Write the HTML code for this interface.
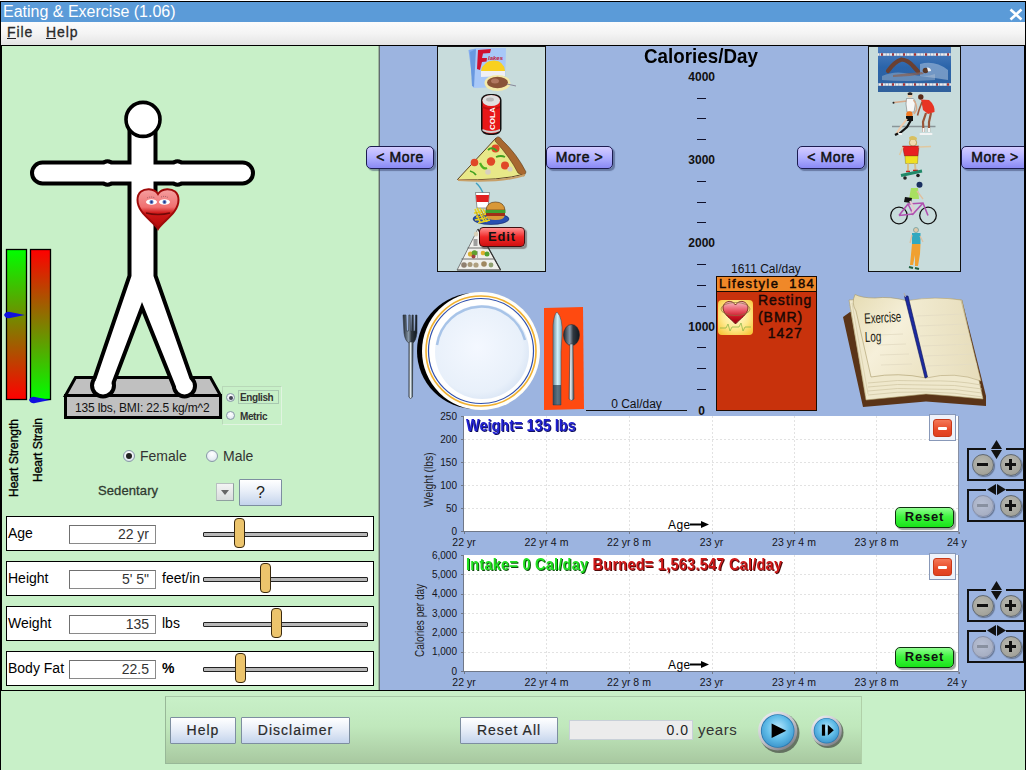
<!DOCTYPE html>
<html><head><meta charset="utf-8">
<style>
*{margin:0;padding:0;box-sizing:border-box}
html,body{width:1026px;height:770px;overflow:hidden;background:#fff;font-family:"Liberation Sans",sans-serif}
.a{position:absolute}
#win{position:absolute;left:0;top:0;width:1026px;height:770px;background:#c8f0c8;overflow:hidden}
#bord{position:absolute;left:0;top:1px;z-index:50;width:1026px;height:770px;border-left:1px solid #000;border-top:1px solid #000;border-right:1px solid #000}
#title{left:1px;top:2px;width:1024px;height:20px;background:#5b9bd8;color:#fff;font-size:16px;line-height:19px;padding-left:2px;white-space:nowrap}
#menu{left:1px;top:22px;width:1024px;height:23px;background:linear-gradient(#fcfcfc,#f4f4f4 50%,#e4e4e4);font-size:14px;color:#2a2a2a}
#menu span{position:absolute;top:2px;letter-spacing:0.9px;-webkit-text-stroke:0.3px #2a2a2a}
#menu u{text-decoration:none}
#sep{left:1px;top:45px;width:1024px;height:1px;background:#000}
#left{left:1px;top:46px;width:377px;height:644px;background:#c8f0c8;border-left:1px solid #000}
#blue{left:380px;top:46px;width:645px;height:644px;background:#9cb4e0}
#bredge{left:1024px;top:46px;width:1px;height:644px;background:#000;z-index:40}
#vsep{left:378px;top:46px;width:2px;height:644px;background:linear-gradient(90deg,#a0b8a0 0,#a0b8a0 50%,#606c70 50%,#606c70 100%)}
#hsep{left:1px;top:690px;width:1024px;height:1px;background:#000}

.rad{width:12px;height:12px;border-radius:50%;background:radial-gradient(circle at 50% 30%,#fff,#e8eef4 60%,#c8d0dc);border:1px solid #8898a8}
.rad i{position:absolute;left:2px;top:2px;width:6px;height:6px;border-radius:50%;background:#222}
.rad.sm{width:9px;height:9px}
.rad.sm i{left:1.5px;top:1.5px;width:4px;height:4px;background:#445}
.btnb{background:linear-gradient(#ffffff,#e8eef8 45%,#c4d4ec);border:1px solid #7d8ea0;color:#222;text-align:center;border-radius:1px}
.srow{left:6px;width:368px;height:35px;background:#fff;border:1.5px solid #000}
.srow .lb{position:absolute;left:1px;top:8px;font-size:14px;color:#000;line-height:16px}
.srow .tf{position:absolute;left:62px;top:7.5px;width:87px;height:19px;border:1px solid #8a8a8a;border-top-color:#707070;border-left-color:#707070;font-size:14px;color:#333;text-align:right;padding-right:6px;line-height:17px}
.srow .un{position:absolute;left:155px;top:8px;font-size:14px;color:#000;line-height:16px}
.srow::after{content:"";position:absolute;left:196px;top:15px;width:163px;height:3px;background:#b8b8b8;border:1px solid #222;border-radius:1px}
.thumb{width:11px;height:30px;background:#ecc46c;border:1.5px solid #3a2a10;border-radius:4px;z-index:5}

.more{height:23px;border:1.5px solid #1c1c50;border-radius:5px;background:linear-gradient(#d4ccff,#b0b0ff 50%,#8a8af4);font-size:14px;font-weight:normal;color:#111;text-align:center;line-height:20px;letter-spacing:0.6px;-webkit-text-stroke:0.5px #111;box-shadow:2px 2px 1px rgba(40,50,90,0.45);white-space:nowrap}
.axl{font-size:12px;font-weight:bold;color:#111;text-align:right;line-height:14px}

.yl{font-size:10px;color:#151520;text-align:right;line-height:13px}
.xl{font-size:10.5px;color:#151520;line-height:14px;white-space:nowrap}
.ytl{font-size:12px;color:#222;line-height:12px;white-space:nowrap;transform-origin:0 0}
.minb{width:27px;height:27px;border:1px solid #8898b8;background:#eef2fa}
.minb .mi{position:absolute;left:3px;top:4px;width:19px;height:18px;border-radius:3px;background:linear-gradient(#f47858,#e84a28 60%,#e04020);border:1px solid #c83818}
.minb .mi i{position:absolute;left:4px;top:7px;width:9px;height:2.5px;background:#fff;border-radius:1px}
.rst{width:59px;height:21px;border:1.5px solid #103010;border-radius:5px;background:linear-gradient(#90ff90,#40f440 45%,#18e418);font-size:13px;font-weight:bold;color:#111;text-align:center;line-height:18px;letter-spacing:0.8px;box-shadow:2px 2px 1px rgba(40,60,40,0.45)}
.zb{width:22px;height:22px;border-radius:50%;background:radial-gradient(circle at 45% 40%,#b8b8b0,#a4a49c 65%,#88887f);border:1.2px solid #606870;box-shadow:1px 1px 1px rgba(0,0,0,0.35)}
.zb b{position:absolute;background:#111}
.zb b.h{left:4.3px;top:8.3px;width:11px;height:3px}
.zb b.v{left:8.3px;top:4.3px;width:3px;height:11px}
.zb.dis{background:radial-gradient(circle at 45% 40%,#b8c0d4,#a8b0c4 65%,#98a0b8);border-color:#8890a8}
.zb.dis b{background:#8890a0}

.bt{font-size:14px;font-weight:normal;line-height:25px;letter-spacing:1px;color:#2a2a2a;-webkit-text-stroke:0.2px #2a2a2a}
.edit{width:46px;height:20px;border:1.5px solid #401010;border-radius:4px;background:linear-gradient(#ff9090,#f02828 50%,#d01010);font-size:13px;font-weight:bold;color:#111;text-align:center;line-height:17px;letter-spacing:0.8px;box-shadow:2px 2px 1px rgba(60,40,40,0.45)}
</style></head><body>
<div id="win">
<div id="bord"></div><div class="a" style="left:0;top:0;width:1026px;height:1px;background:#fff;z-index:60"></div>
<div class="a" id="title">Eating &amp; Exercise (1.06)</div>
<div class="a" id="menu"><span style="left:6px"><u>F</u>ile</span><span style="left:45px"><u>H</u>elp</span></div>
<svg class="a" style="left:1008px;top:7px" width="16" height="15"><path d="M2.5,2.5 L13.5,12.5 M13.5,2.5 L2.5,12.5" stroke="#fff" stroke-width="2.6"/></svg>
<div class="a" style="left:7px;top:38px;width:9px;height:1px;background:#222"></div><div class="a" style="left:46px;top:38px;width:10px;height:1px;background:#222"></div>
<div class="a" id="sep"></div>
<div class="a" id="left"></div>
<div class="a" id="vsep"></div>
<div class="a" id="blue"></div>
<div class="a" id="hsep"></div>
<div class="a" id="bredge"></div>
<!-- LEFT PANEL -->
<svg class="a" style="left:0;top:0" width="1026" height="770">
<defs>
<linearGradient id="gStr" x1="0" y1="0" x2="0" y2="1"><stop offset="0" stop-color="#00ff00"/><stop offset="0.5" stop-color="#7f7f00"/><stop offset="1" stop-color="#ff0000"/></linearGradient>
<linearGradient id="gStn" x1="0" y1="0" x2="0" y2="1"><stop offset="0" stop-color="#ff0000"/><stop offset="0.5" stop-color="#7f7f00"/><stop offset="1" stop-color="#00ff00"/></linearGradient>
</defs>
<rect x="6.5" y="249.5" width="20" height="150" fill="url(#gStr)" stroke="#000" stroke-width="1.3"/>
<rect x="30.5" y="249.5" width="20" height="150" fill="url(#gStn)" stroke="#000" stroke-width="1.3"/>
<path d="M4,315 Q6,311 10,312 L25,315 L10,318 Q6,319 4,315Z" fill="#1010e0"/>
<path d="M29,400 Q31,396 35,397 L50,400 L35,403 Q31,404 29,400Z" fill="#1010e0"/>
<!-- platform -->
<path d="M75.5,377.5 L210.5,377.5 L220.5,395.5 L65.5,395.5Z" fill="#c0c0c0" stroke="#000" stroke-width="3" stroke-linejoin="miter"/>
<rect x="65.5" y="395.5" width="155" height="22" fill="#c0c0c0" stroke="#000" stroke-width="3"/>
<!-- figure -->
<g stroke="#000" stroke-width="8" fill="#fff" stroke-linejoin="round">
<rect x="34" y="164.5" width="217" height="17" rx="8.5"/><ellipse cx="107.5" cy="173" rx="6" ry="9.8"/><ellipse cx="177.5" cy="173" rx="6" ry="9.8"/>
<path d="M131.5,130 L153.5,130 L153.5,276 L191,383 L177,389 L142,302 L109,389 L95,383 L131.5,276Z"/><circle cx="103" cy="385.5" r="9"/><circle cx="184.5" cy="386" r="8.5"/>
</g>
<g fill="#fff">
<rect x="34" y="164.5" width="217" height="17" rx="8.5"/><ellipse cx="107.5" cy="173" rx="6" ry="9.8"/><ellipse cx="177.5" cy="173" rx="6" ry="9.8"/>
<path d="M131.5,130 L153.5,130 L153.5,276 L191,383 L177,389 L142,302 L109,389 L95,383 L131.5,276Z"/><circle cx="103" cy="385.5" r="9"/><circle cx="184.5" cy="386" r="8.5"/>
</g>
<circle cx="143" cy="119.4" r="17" fill="#fff" stroke="#000" stroke-width="3.6"/>
</svg>

<!-- heart on chest -->
<svg class="a" style="left:134px;top:186px" width="48" height="46" viewBox="0 0 48 46">
<defs>
<linearGradient id="hg" x1="0" y1="0" x2="0" y2="1"><stop offset="0" stop-color="#f4a0a0"/><stop offset="0.45" stop-color="#f07070"/><stop offset="0.6" stop-color="#d01818"/><stop offset="1" stop-color="#b00808"/></linearGradient>
</defs>
<path d="M24,43 C19,35 3.5,27 3.5,14 C3.5,6 9,3 15,3.2 C19.5,3.5 22.5,5.5 24,8 C25.5,5.5 28.5,3.5 33,3.2 C39,3 44.5,6 44.5,14 C44.5,27 29,35 24,43Z" fill="url(#hg)" stroke="#a00a0a" stroke-width="2"/>
<ellipse cx="17.5" cy="16" rx="5.5" ry="2.8" fill="#fff"/>
<ellipse cx="30.5" cy="16" rx="5.5" ry="2.8" fill="#fff"/>
<circle cx="17.5" cy="16" r="2" fill="#5070c0"/><circle cx="30.5" cy="16" r="2" fill="#5070c0"/>
<circle cx="17.5" cy="16" r="0.8" fill="#102060"/><circle cx="30.5" cy="16" r="0.8" fill="#102060"/>
<path d="M13,12 Q17,10 21,12 M27,11 Q31,9.5 34,11.5" stroke="#8a5060" stroke-width="0.8" fill="none" stroke-dasharray="1,1"/>
<path d="M12,27 Q24,30 36,27" stroke="#700808" stroke-width="1.6" fill="none"/>
</svg>
<div class="a" style="left:75px;top:401px;font-size:12px;color:#111;white-space:nowrap;letter-spacing:-0.15px">135 lbs, BMI: 22.5 kg/m^2</div>
<!-- heart labels -->
<div class="a" style="left:6.5px;top:497px;font-size:12px;color:#000;white-space:nowrap;transform:rotate(-90deg);transform-origin:0 0;line-height:14px;-webkit-text-stroke:0.35px #000">Heart Strength</div>
<div class="a" style="left:31px;top:482px;font-size:12px;color:#000;white-space:nowrap;transform:rotate(-90deg);transform-origin:0 0;line-height:14px;-webkit-text-stroke:0.35px #000">Heart Strain</div>
<!-- english/metric -->
<div class="a" style="left:222px;top:386px;width:60px;height:39px;border:1px solid #b8d8b8;border-right-color:#e0f4e0;border-bottom-color:#e0f4e0"></div>
<div class="a" style="left:238px;top:390px;width:41px;height:14px;border:1px solid #a8c8b0"></div>
<div class="a rad sm" style="left:226px;top:393px"><i></i></div>
<div class="a rad sm" style="left:226px;top:411px"></div>
<div class="a" style="left:240px;top:391px;font-size:10px;font-weight:bold;color:#333;line-height:14px;letter-spacing:-0.4px">English</div>
<div class="a" style="left:240px;top:409.5px;font-size:10px;font-weight:bold;color:#333;line-height:14px;letter-spacing:-0.4px">Metric</div>
<!-- gender -->
<div class="a rad" style="left:123px;top:450px"><i></i></div>
<div class="a" style="left:140px;top:448px;font-size:14px;color:#333;line-height:16px">Female</div>
<div class="a rad" style="left:206px;top:450px"></div>
<div class="a" style="left:223px;top:448px;font-size:14px;color:#333;line-height:16px">Male</div>
<!-- sedentary -->
<div class="a" style="left:98px;top:483.5px;font-size:13px;color:#303a30;line-height:14px;letter-spacing:0.1px;-webkit-text-stroke:0.3px #303a30">Sedentary</div>
<div class="a" style="left:216px;top:483px;width:18px;height:18px;background:linear-gradient(#f4f4f4,#d8dcdc);border:1px solid #b8c0c0;border-right-color:#90a0a0;border-bottom-color:#90a0a0"><div class="a" style="left:4px;top:6px;width:0;height:0;border-left:4px solid transparent;border-right:4px solid transparent;border-top:5px solid #666"></div></div>
<div class="a btnb" style="left:239px;top:479px;width:43px;height:27px;font-size:16px;line-height:25px">?</div>
<!-- sliders -->
<div class="a srow" style="top:516px"><span class="lb">Age</span><div class="tf">22 yr</div></div>
<div class="a srow" style="top:561px"><span class="lb">Height</span><div class="tf">5' 5"</div><span class="un">feet/in</span></div>
<div class="a srow" style="top:606px"><span class="lb">Weight</span><div class="tf">135</div><span class="un">lbs</span></div>
<div class="a srow" style="top:651px"><span class="lb">Body Fat</span><div class="tf">22.5</div><span class="un" style="font-weight:bold">%</span></div>
<div class="a thumb" style="left:234px;top:518px"></div>
<div class="a thumb" style="left:260px;top:563px"></div>
<div class="a thumb" style="left:271px;top:608px"></div>
<div class="a thumb" style="left:235px;top:653px"></div>
<div class="a more" style="left:366px;top:146px;width:68px">&lt; More</div>
<div class="a more" style="left:546px;top:146px;width:67px">More &gt;</div>
<div class="a more" style="left:797px;top:146px;width:68px">&lt; More</div>
<div class="a more" style="left:961px;top:146px;width:68px">More &gt;</div>
<div class="a" style="left:437px;top:46px;width:109px;height:226px;background:#c8dcdc;border:1.5px solid #111"></div>
<div class="a" style="left:868px;top:46px;width:93px;height:226px;background:#c8dcdc;border:1.5px solid #111"></div>
<div class="a" style="left:644px;top:45px;font-size:21px;font-weight:bold;color:#000;line-height:21px;white-space:nowrap;transform:scaleX(0.895);transform-origin:0 0">Calories/Day</div>
<div class="a axl" style="left:671px;top:69.5px;width:44px">4000</div>
<div class="a axl" style="left:671px;top:153.0px;width:44px">3000</div>
<div class="a axl" style="left:671px;top:236.3px;width:44px">2000</div>
<div class="a axl" style="left:671px;top:319.7px;width:44px">1000</div>
<div class="a axl" style="left:671px;top:404px;width:34px">0</div>
<div class="a" style="left:697px;top:98px;width:9px;height:1.2px;background:#10102a"></div>
<div class="a" style="left:697px;top:118px;width:9px;height:1.2px;background:#10102a"></div>
<div class="a" style="left:697px;top:139px;width:9px;height:1.2px;background:#10102a"></div>
<div class="a" style="left:697px;top:181px;width:9px;height:1.2px;background:#10102a"></div>
<div class="a" style="left:697px;top:202px;width:9px;height:1.2px;background:#10102a"></div>
<div class="a" style="left:697px;top:222px;width:9px;height:1.2px;background:#10102a"></div>
<div class="a" style="left:697px;top:264px;width:9px;height:1.2px;background:#10102a"></div>
<div class="a" style="left:697px;top:285px;width:9px;height:1.2px;background:#10102a"></div>
<div class="a" style="left:697px;top:306px;width:9px;height:1.2px;background:#10102a"></div>
<div class="a" style="left:697px;top:347px;width:9px;height:1.2px;background:#10102a"></div>
<div class="a" style="left:697px;top:368px;width:9px;height:1.2px;background:#10102a"></div>
<div class="a" style="left:697px;top:389px;width:9px;height:1.2px;background:#10102a"></div>
<div class="a" style="left:731px;top:262px;font-size:12px;color:#111;line-height:14px;white-space:nowrap">1611 Cal/day</div>
<div class="a" style="left:716px;top:276px;width:101px;height:135px;background:#c8320c;border:1.5px solid #1a0a00"></div>
<div class="a" style="left:716px;top:276px;width:101px;height:16px;background:#f08828;border:1.5px solid #1a0a00;border-bottom-width:1px"></div>
<div class="a" style="left:719px;top:276px;font-size:13px;color:#140600;line-height:16px;letter-spacing:1.4px;white-space:pre;-webkit-text-stroke:0.45px #140600">Lifestyle  184</div>
<div class="a" style="left:758px;top:292px;font-size:14px;color:#1a0804;line-height:16.6px;letter-spacing:0.95px;white-space:pre;-webkit-text-stroke:0.45px #1a0804">Resting
(BMR)
  1427</div>
<div class="a" style="left:586px;top:397px;width:101px;font-size:12px;color:#111;line-height:14px;text-align:center">0 Cal/day</div>
<div class="a" style="left:586px;top:409.5px;width:101px;height:1.3px;background:#111"></div>
<div class="a" style="left:464px;top:416px;width:495px;height:115px;background:#fff"></div>
<svg class="a" style="left:464px;top:416px" width="495" height="115"><line x1="0" y1="92.5" x2="495" y2="92.5" stroke="#e2e2e2" stroke-width="1" stroke-dasharray="2,2"/><line x1="0" y1="69.5" x2="495" y2="69.5" stroke="#e2e2e2" stroke-width="1" stroke-dasharray="2,2"/><line x1="0" y1="46.5" x2="495" y2="46.5" stroke="#e2e2e2" stroke-width="1" stroke-dasharray="2,2"/><line x1="0" y1="23.5" x2="495" y2="23.5" stroke="#e2e2e2" stroke-width="1" stroke-dasharray="2,2"/><line x1="82.5" y1="0" x2="82.5" y2="115" stroke="#e2e2e2" stroke-width="1" stroke-dasharray="2,2"/><line x1="165.5" y1="0" x2="165.5" y2="115" stroke="#e2e2e2" stroke-width="1" stroke-dasharray="2,2"/><line x1="248.5" y1="0" x2="248.5" y2="115" stroke="#e2e2e2" stroke-width="1" stroke-dasharray="2,2"/><line x1="330.5" y1="0" x2="330.5" y2="115" stroke="#e2e2e2" stroke-width="1" stroke-dasharray="2,2"/><line x1="412.5" y1="0" x2="412.5" y2="115" stroke="#e2e2e2" stroke-width="1" stroke-dasharray="2,2"/></svg>
<div class="a" style="left:463px;top:416px;width:1px;height:116px;background:#707888"></div>
<div class="a" style="left:463px;top:531px;width:496px;height:1px;background:#707888"></div>
<div class="a" style="left:958px;top:416px;width:1px;height:118px;background:#8890a4"></div>
<div class="a yl" style="left:404px;top:524.5px;width:53px">0</div>
<div class="a" style="left:461px;top:531px;width:2px;height:1px;background:#707888"></div>
<div class="a yl" style="left:404px;top:501.5px;width:53px">50</div>
<div class="a" style="left:461px;top:508px;width:2px;height:1px;background:#707888"></div>
<div class="a yl" style="left:404px;top:478.5px;width:53px">100</div>
<div class="a" style="left:461px;top:485px;width:2px;height:1px;background:#707888"></div>
<div class="a yl" style="left:404px;top:455.5px;width:53px">150</div>
<div class="a" style="left:461px;top:462px;width:2px;height:1px;background:#707888"></div>
<div class="a yl" style="left:404px;top:432.5px;width:53px">200</div>
<div class="a" style="left:461px;top:439px;width:2px;height:1px;background:#707888"></div>
<div class="a yl" style="left:404px;top:409.5px;width:53px">250</div>
<div class="a" style="left:461px;top:416px;width:2px;height:1px;background:#707888"></div>
<div class="a xl" style="left:424.0px;top:535px;width:80px;text-align:center">22 yr</div>
<div class="a" style="left:464px;top:532px;width:1px;height:2px;background:#707888"></div>
<div class="a xl" style="left:506.5px;top:535px;width:80px;text-align:center">22 yr 4 m</div>
<div class="a" style="left:546px;top:532px;width:1px;height:2px;background:#707888"></div>
<div class="a xl" style="left:589.0px;top:535px;width:80px;text-align:center">22 yr 8 m</div>
<div class="a" style="left:629px;top:532px;width:1px;height:2px;background:#707888"></div>
<div class="a xl" style="left:671.5px;top:535px;width:80px;text-align:center">23 yr</div>
<div class="a" style="left:712px;top:532px;width:1px;height:2px;background:#707888"></div>
<div class="a xl" style="left:754.0px;top:535px;width:80px;text-align:center">23 yr 4 m</div>
<div class="a" style="left:794px;top:532px;width:1px;height:2px;background:#707888"></div>
<div class="a xl" style="left:836.5px;top:535px;width:80px;text-align:center">23 yr 8 m</div>
<div class="a" style="left:876px;top:532px;width:1px;height:2px;background:#707888"></div>
<div class="a xl" style="left:947.0px;top:535px">24 y</div>
<div class="a" style="left:959px;top:532px;width:1px;height:2px;background:#707888"></div>
<div class="a ytl" style="left:423px;top:506.5px;transform:rotate(-90deg) scaleX(0.855)">Weight (lbs)</div>
<div class="a" style="left:668px;top:517.5px;font-size:12px;letter-spacing:0.4px;color:#000;line-height:14px">Age</div>
<svg class="a" style="left:690px;top:520px" width="22" height="9"><path d="M0,4.5 L13,4.5" stroke="#000" stroke-width="2"/><path d="M11,1 L19,4.5 L11,8Z" fill="#000"/></svg>
<div class="a" style="left:466px;top:417px;font-size:14.5px;font-weight:bold;color:#2020d0;text-shadow:1px 1px 0 #101060;line-height:16px;white-space:nowrap;transform:scaleY(1.1);transform-origin:0 0">Weight= 135 lbs</div>
<div class="a minb" style="left:929px;top:414px"><div class="mi"><i></i></div></div>
<div class="a rst" style="left:895px;top:507px">Reset</div>
<svg class="a" style="left:966px;top:440px" width="60" height="82"><path d="M20,9 L2,9 L2,40 L58,40 L58,9 L40,9" fill="none" stroke="#111" stroke-width="2"/><path d="M30.5,0 L36,9 L25,9Z M30.5,19 L36,10 L25,10Z" fill="#111"/><path d="M20,50 L2,50 L2,81 L58,81 L58,50 L40,50" fill="none" stroke="#111" stroke-width="2"/><path d="M21,49.5 L30,44 L30,55Z M40,49.5 L31,44 L31,55Z" fill="#111"/></svg>
<div class="a zb" style="left:971.5px;top:454px"><b class="h"></b></div>
<div class="a zb" style="left:999.5px;top:454px"><b class="h"></b><b class="v"></b></div>
<div class="a zb dis" style="left:971.5px;top:495px"><b class="h"></b></div>
<div class="a zb" style="left:999.5px;top:495px"><b class="h"></b><b class="v"></b></div>
<div class="a" style="left:464px;top:555px;width:495px;height:116px;background:#fff"></div>
<svg class="a" style="left:464px;top:555px" width="495" height="116"><line x1="0" y1="97.5" x2="495" y2="97.5" stroke="#e2e2e2" stroke-width="1" stroke-dasharray="2,2"/><line x1="0" y1="77.5" x2="495" y2="77.5" stroke="#e2e2e2" stroke-width="1" stroke-dasharray="2,2"/><line x1="0" y1="58.5" x2="495" y2="58.5" stroke="#e2e2e2" stroke-width="1" stroke-dasharray="2,2"/><line x1="0" y1="39.5" x2="495" y2="39.5" stroke="#e2e2e2" stroke-width="1" stroke-dasharray="2,2"/><line x1="0" y1="19.5" x2="495" y2="19.5" stroke="#e2e2e2" stroke-width="1" stroke-dasharray="2,2"/><line x1="82.5" y1="0" x2="82.5" y2="116" stroke="#e2e2e2" stroke-width="1" stroke-dasharray="2,2"/><line x1="165.5" y1="0" x2="165.5" y2="116" stroke="#e2e2e2" stroke-width="1" stroke-dasharray="2,2"/><line x1="248.5" y1="0" x2="248.5" y2="116" stroke="#e2e2e2" stroke-width="1" stroke-dasharray="2,2"/><line x1="330.5" y1="0" x2="330.5" y2="116" stroke="#e2e2e2" stroke-width="1" stroke-dasharray="2,2"/><line x1="412.5" y1="0" x2="412.5" y2="116" stroke="#e2e2e2" stroke-width="1" stroke-dasharray="2,2"/></svg>
<div class="a" style="left:463px;top:555px;width:1px;height:117px;background:#707888"></div>
<div class="a" style="left:463px;top:671px;width:496px;height:1px;background:#707888"></div>
<div class="a" style="left:958px;top:555px;width:1px;height:119px;background:#8890a4"></div>
<div class="a yl" style="left:404px;top:664.5px;width:53px">0</div>
<div class="a" style="left:461px;top:671px;width:2px;height:1px;background:#707888"></div>
<div class="a yl" style="left:404px;top:645.2px;width:53px">1,000</div>
<div class="a" style="left:461px;top:652px;width:2px;height:1px;background:#707888"></div>
<div class="a yl" style="left:404px;top:625.8px;width:53px">2,000</div>
<div class="a" style="left:461px;top:632px;width:2px;height:1px;background:#707888"></div>
<div class="a yl" style="left:404px;top:606.5px;width:53px">3,000</div>
<div class="a" style="left:461px;top:613px;width:2px;height:1px;background:#707888"></div>
<div class="a yl" style="left:404px;top:587.2px;width:53px">4,000</div>
<div class="a" style="left:461px;top:594px;width:2px;height:1px;background:#707888"></div>
<div class="a yl" style="left:404px;top:567.8px;width:53px">5,000</div>
<div class="a" style="left:461px;top:574px;width:2px;height:1px;background:#707888"></div>
<div class="a yl" style="left:404px;top:548.5px;width:53px">6,000</div>
<div class="a" style="left:461px;top:555px;width:2px;height:1px;background:#707888"></div>
<div class="a xl" style="left:424.0px;top:675px;width:80px;text-align:center">22 yr</div>
<div class="a" style="left:464px;top:672px;width:1px;height:2px;background:#707888"></div>
<div class="a xl" style="left:506.5px;top:675px;width:80px;text-align:center">22 yr 4 m</div>
<div class="a" style="left:546px;top:672px;width:1px;height:2px;background:#707888"></div>
<div class="a xl" style="left:589.0px;top:675px;width:80px;text-align:center">22 yr 8 m</div>
<div class="a" style="left:629px;top:672px;width:1px;height:2px;background:#707888"></div>
<div class="a xl" style="left:671.5px;top:675px;width:80px;text-align:center">23 yr</div>
<div class="a" style="left:712px;top:672px;width:1px;height:2px;background:#707888"></div>
<div class="a xl" style="left:754.0px;top:675px;width:80px;text-align:center">23 yr 4 m</div>
<div class="a" style="left:794px;top:672px;width:1px;height:2px;background:#707888"></div>
<div class="a xl" style="left:836.5px;top:675px;width:80px;text-align:center">23 yr 8 m</div>
<div class="a" style="left:876px;top:672px;width:1px;height:2px;background:#707888"></div>
<div class="a xl" style="left:947.0px;top:675px">24 y</div>
<div class="a" style="left:959px;top:672px;width:1px;height:2px;background:#707888"></div>
<div class="a ytl" style="left:414px;top:657px;transform:rotate(-90deg) scaleX(0.837)">Calories per day</div>
<div class="a" style="left:668px;top:657.5px;font-size:12px;letter-spacing:0.4px;color:#000;line-height:14px">Age</div>
<svg class="a" style="left:690px;top:660px" width="22" height="9"><path d="M0,4.5 L13,4.5" stroke="#000" stroke-width="2"/><path d="M11,1 L19,4.5 L11,8Z" fill="#000"/></svg>
<div class="a" style="left:466px;top:556px;font-size:14.5px;font-weight:bold;line-height:16px;white-space:nowrap;letter-spacing:0.25px;transform:scaleY(1.1);transform-origin:0 0"><span style="color:#20e020;text-shadow:1px 1px 0 #0a500a">Intake= 0 Cal/day </span><span style="color:#d01818;text-shadow:1px 1px 0 #500808">Burned= 1,563.547 Cal/day</span></div>
<div class="a minb" style="left:929px;top:553px"><div class="mi"><i></i></div></div>
<div class="a rst" style="left:895px;top:647px">Reset</div>
<svg class="a" style="left:966px;top:580.5px" width="60" height="82"><path d="M20,9 L2,9 L2,40 L58,40 L58,9 L40,9" fill="none" stroke="#111" stroke-width="2"/><path d="M30.5,0 L36,9 L25,9Z M30.5,19 L36,10 L25,10Z" fill="#111"/><path d="M20,50 L2,50 L2,81 L58,81 L58,50 L40,50" fill="none" stroke="#111" stroke-width="2"/><path d="M21,49.5 L30,44 L30,55Z M40,49.5 L31,44 L31,55Z" fill="#111"/></svg>
<div class="a zb" style="left:971.5px;top:594.5px"><b class="h"></b></div>
<div class="a zb" style="left:999.5px;top:594.5px"><b class="h"></b><b class="v"></b></div>
<div class="a zb dis" style="left:971.5px;top:635.5px"><b class="h"></b></div>
<div class="a zb" style="left:999.5px;top:635.5px"><b class="h"></b><b class="v"></b></div>
<!-- CLIPART -->
<svg class="a" style="left:0;top:0" width="1026" height="770">
<defs>
<radialGradient id="plg" cx="0.45" cy="0.45" r="0.6"><stop offset="0" stop-color="#f4f8ff"/><stop offset="0.8" stop-color="#e8f0fa"/><stop offset="1" stop-color="#d8e4f4"/></radialGradient>
<linearGradient id="silv" x1="0" y1="0" x2="1" y2="0"><stop offset="0" stop-color="#707880"/><stop offset="0.35" stop-color="#f0f4f8"/><stop offset="0.6" stop-color="#a0b0b8"/><stop offset="1" stop-color="#404850"/></linearGradient>
<linearGradient id="silvd" x1="0" y1="0" x2="1" y2="0"><stop offset="0" stop-color="#202830"/><stop offset="0.4" stop-color="#8898a8"/><stop offset="0.6" stop-color="#303840"/><stop offset="1" stop-color="#101820"/></linearGradient>
<linearGradient id="knf" x1="0" y1="0" x2="1" y2="0"><stop offset="0" stop-color="#6a8a98"/><stop offset="0.5" stop-color="#d0f0f8"/><stop offset="1" stop-color="#88b0c0"/></linearGradient>
</defs>
<!-- plate -->
<circle cx="475" cy="351" r="58" fill="#000"/>
<circle cx="481" cy="351" r="59" fill="#fffef8"/>
<circle cx="481" cy="351" r="55" fill="none" stroke="#f0b030" stroke-width="1.6"/>
<circle cx="481" cy="351" r="52.5" fill="none" stroke="#3050b0" stroke-width="1.2"/>
<circle cx="481" cy="351" r="51" fill="#fff"/>
<circle cx="482" cy="352" r="47" fill="url(#plg)"/>
<path d="M437,345 A45,45 0 0 1 525,340" fill="none" stroke="#a8c4e8" stroke-width="2.5"/>
<!-- fork -->
<path fill="url(#silvd)" d="M403,315 L404,333 Q405,341 409,343 L409,397 Q410,400 412,397 L413,343 Q416,341 417,333 L417,315 L415.5,315 L415,331 L413.5,331 L413.3,315 L412,315 L411.5,331 L410.5,331 L410.2,315 L408.8,315 L408.5,331 L406.5,331 L406,315Z" stroke="#303840" stroke-width="0.6"/>
<path d="M409.2,342 L409,397 Q410.5,400 412.5,397 L412.8,342Z" fill="url(#silv)" stroke="#303840" stroke-width="0.5"/>
<!-- napkin -->
<path d="M544,308 L583,307 L584,409 L544,410Z" fill="#ff4a10"/>
<!-- knife -->
<path d="M557,312 Q563,318 562,335 L561,352 L561,405 L553,405 L553,352 L553,325 Q554,314 557,312Z" fill="url(#knf)" stroke="#304050" stroke-width="0.5"/>
<rect x="553" y="385" width="8" height="20" fill="#102030" opacity="0.6"/>
<!-- spoon -->
<ellipse cx="571.5" cy="335" rx="8" ry="10.5" fill="url(#silvd)" stroke="#202830" stroke-width="0.6"/>
<path d="M570,344 L569,399 Q571.5,402 574,399 L573,344Z" fill="url(#silv)" stroke="#303840" stroke-width="0.5"/>
<!-- food items -->
<g>
<path d="M468.5,50 L476,48.5 L474,87.5 L473.5,87.5Z" fill="#80aaf0"/>
<path d="M475,48 L506,48 L505,87 L473.5,88Z" fill="#a8c8f8"/>
<path d="M470,52 L476,49 L474,87 L472,86Z" fill="#6898e0"/>
<path d="M478,50 L491,49 L490,53 L483,53.5 L482,58 L487,58 L486.5,61.5 L482,62 L480,70 L477,69Z" fill="#d01030"/>
<text x="488" y="60" font-family="Liberation Sans" font-size="6" font-weight="bold" fill="#c01838" font-style="italic">lakes</text>
<path d="M481,71 Q483,61 494,60.5 Q504,61 505,71Z" fill="#f8d020"/><path d="M481,71 L505,71 L505,76 L481,77Z" fill="#f0f0f4"/>
<ellipse cx="497.5" cy="83" rx="13" ry="8" fill="#f4eaa8"/>
<ellipse cx="497.5" cy="82.5" rx="10.5" ry="5.8" fill="#8a5438"/>
<ellipse cx="495" cy="81" rx="4" ry="2.5" fill="#b07860"/>
<path d="M507,84 L516,86" stroke="#889" stroke-width="1"/>
<!-- cola -->
<rect x="481" y="94" width="20.5" height="41" rx="8" ry="6" fill="#111"/>
<rect x="482.5" y="95.5" width="17.5" height="38" rx="7" ry="5" fill="#e81818"/>
<ellipse cx="491.2" cy="100.5" rx="8.8" ry="5.5" fill="#e0e0e0"/>
<ellipse cx="490" cy="99.5" rx="4" ry="2" fill="#b8b8b8"/>
<path d="M482.5,106 Q491,110 500,106 L500,108 Q491,112 482.5,108Z" fill="#c01010"/>
<path d="M482.5,129 Q491,133 500,129 L500,131 Q491,135 482.5,131Z" fill="#d0d0d0"/>
<text x="0" y="0" transform="translate(494.5,130) rotate(-90)" font-family="Liberation Sans" font-size="8" font-weight="bold" fill="#fff">COLA</text>
<!-- pizza -->
<path d="M457.5,179.5 L496,138 L525,174 Q500,181 457.5,179.5Z" fill="#e8e888" stroke="#5a4020" stroke-width="1"/>
<path d="M496,138 Q499,135 502,140 Q517,154 526,172 L524,176 L518,173 Q510,157 495,141Z" fill="#a86830" stroke="#5a3a18" stroke-width="0.6"/>
<path d="M458,179 Q500,182 525,174 L525,176 Q500,184 458,181Z" fill="#c8a068"/>
<circle cx="495.5" cy="148.5" r="4" fill="#e04828"/>
<circle cx="474.5" cy="162.5" r="3.8" fill="#e04828"/>
<circle cx="491" cy="161.5" r="4.2" fill="#e04828"/>
<circle cx="505" cy="165.5" r="4" fill="#e04828"/>
<path d="M488,150 Q492,146 497,151" stroke="#40a020" stroke-width="2" fill="none"/>
<path d="M480,163 Q483,170 487,168" stroke="#50b020" stroke-width="2.2" fill="none"/>
<path d="M496,157 Q501,155 505,157" stroke="#40a020" stroke-width="1.8" fill="none"/>
<path d="M470,171 Q474,172 476,175" stroke="#40a020" stroke-width="1.8" fill="none"/>
<circle cx="488" cy="172" r="2.8" fill="#d8d0c0"/>
<circle cx="510" cy="169" r="2.6" fill="#d8d0c0"/>
<!-- fast food -->
<path d="M476,183 Q480,186 483,193" stroke="#40a0c0" stroke-width="1.5" fill="none"/>
<path d="M475.5,192.5 L489.5,192.5 L488,208 L477,208Z" fill="#fff" stroke="#555" stroke-width="0.6"/>
<path d="M476,195 L489,195 L488.5,202 L476.5,202Z" fill="#e02020"/>
<ellipse cx="491" cy="219" rx="18" ry="5.5" fill="#2850b0" stroke="#102060" stroke-width="0.6"/>
<path d="M475,209 L480,222 M477,208 L484,221 M480,208 L487,222 M474,213 L482,212 M476,217 L486,214 M475,220 L489,217 M478,223 L490,220 M483,209 L489,219" stroke="#e8d020" stroke-width="1.6"/><path d="M476,212 L481,221 M481,210 L486,219" stroke="#907010" stroke-width="0.5"/>
<path d="M486,210 Q487,202 495.5,202 Q504,202 505,210Z" fill="#d89838" stroke="#503010" stroke-width="0.6"/>
<rect x="485.5" y="210" width="20" height="3" fill="#40a030"/>
<rect x="486" y="213" width="19" height="3" fill="#a03018"/>
<path d="M486.5,216 L504.5,216 Q504,220 495.5,220 Q487,220 486.5,216Z" fill="#d89838"/>
<!-- exercise items -->
<defs>
<filter id="bl" x="-0.1" y="-0.1" width="1.2" height="1.2"><feGaussianBlur stdDeviation="0.45"/></filter>
<linearGradient id="wat" x1="0" y1="0" x2="0" y2="1"><stop offset="0" stop-color="#5080c0"/><stop offset="0.45" stop-color="#2a64aa"/><stop offset="1" stop-color="#30609c"/></linearGradient>
</defs>
<g>
<rect x="878" y="47" width="73" height="45" fill="url(#wat)"/>
<g filter="url(#bl)">
<path d="M878,54.5 L951,54.5 M878,84.5 L951,84.5" stroke="#f0ecec" stroke-width="2.4"/>
<path d="M878,54.5 L951,54.5 M878,84.5 L951,84.5" stroke="#a83030" stroke-width="2.4" stroke-dasharray="2,9" stroke-dashoffset="-3"/>
<path d="M879,54.5 L951,54.5 M878,84.5 L951,84.5" stroke="#3a6aa8" stroke-width="2.4" stroke-dasharray="0.8,2.6" opacity="0.5"/>
<path d="M920,64 Q935,60 948,70 L948,80 Q935,78 920,76Z" fill="#c8d8e8" opacity="0.45"/>
<path d="M882,76 Q895,70 910,74 Q925,78 935,74 L935,80 Q905,82 882,80Z" fill="#b8c8d8" opacity="0.4"/>
<path d="M888,71 Q894,62 901.5,59.5 Q908,60 913,66 L918,71.5" stroke="#6a4030" stroke-width="4.2" fill="none" stroke-linecap="round"/>
<path d="M893,75 Q908,73 922,72 L924,74 Q908,77 893,77Z" fill="#8a6050" opacity="0.7"/>
<circle cx="925.5" cy="70.5" r="2.8" fill="#5a3828"/>
<path d="M927,67.5 Q931,67.5 931,71 L928,71.5Z" fill="#f4f4f4"/>
</g>
<!-- basketball -->
<path d="M892,126.5 L935.5,126.5" stroke="#7a8488" stroke-width="1.3" opacity="0.8"/>
<path d="M907,101 L894,102.5" stroke="#d8a888" stroke-width="1.6" stroke-linecap="round"/>
<circle cx="893.5" cy="102.8" r="1" fill="#222"/>
<circle cx="910" cy="95" r="2.6" fill="#e8c8a8"/>
<path d="M907.5,93.5 Q910,91 912.5,93.5 L912,95 L908,95Z" fill="#222"/>
<path d="M906.5,98.5 L913,98.5 Q916,100 915,106 L914,112 L907,112 L906,104Z" fill="#f8f8f8" stroke="#444" stroke-width="0.4"/>
<path d="M913.5,100 Q917,104 916.5,110 L914,114" stroke="#d8a888" stroke-width="1.5" fill="none"/>
<circle cx="909.4" cy="114.4" r="3.2" fill="#f07820"/>
<path d="M906,116 L913,116 L913,121 L906,121Z" fill="#111"/>
<path d="M907,119 L900,128 L896.5,134" stroke="#f0c8a8" stroke-width="2" fill="none"/>
<path d="M911,120 L907,127 L899.5,133.5" stroke="#111" stroke-width="2.2" fill="none"/>
<path d="M895,135 L898,133.5" stroke="#111" stroke-width="2.4"/>
<path d="M899,134 L902,134" stroke="#f4f4f4" stroke-width="2"/>
<circle cx="920.8" cy="97" r="2.7" fill="#5a2a18"/>
<path d="M921,99.5 L929,100 Q935,105 934.5,112 L928,114 L923,110Z" fill="#e83424"/>
<path d="M922,102 L919,110 L917.5,115.5" stroke="#9a5438" stroke-width="1.6" fill="none"/>
<path d="M926,113 L923,122 L923.5,132 M931,113 L929,122 L929,132" stroke="#9a5438" stroke-width="2.2" fill="none"/>
<path d="M923.5,128 L923.5,132 M929,128 L929,132" stroke="#f4f4f4" stroke-width="2"/>
<path d="M920.5,134 L925,134 M926.5,134 L931.5,134" stroke="#f4f4f4" stroke-width="2" stroke-linecap="round"/>
<!-- skateboarder -->
<path d="M909,142 Q913,135 917,142 L917,145 L909,145Z" fill="#e8d070"/>
<circle cx="913" cy="142.5" r="3.6" fill="#f0dcb0" stroke="#8a7030" stroke-width="0.5"/>
<path d="M909,137.5 Q913,134.5 917,138 L916.5,140 L909.5,140Z" fill="#d8c060"/>
<path d="M902.5,146 L919,146 L918,156 L904.5,156Z" fill="#e82020" stroke="#701010" stroke-width="0.4"/>
<path d="M918.5,147 L931,146.5" stroke="#e0c8a0" stroke-width="1.5"/>
<path d="M903,147 L899.5,155" stroke="#e0c8a0" stroke-width="1.5"/>
<path d="M905,156 L918,156 L917.5,163.5 L905.5,163.5Z" fill="#f0e020" stroke="#807010" stroke-width="0.4"/>
<path d="M908,163.5 L908,171 M915,163.5 L915.5,170" stroke="#d8c088" stroke-width="2"/>
<path d="M906,171.5 L910,171.5 M913,170.5 L918,170.5" stroke="#c02020" stroke-width="1.6"/>
<path d="M901,175.5 L922,171" stroke="#208868" stroke-width="3"/>
<circle cx="905" cy="178" r="1.8" fill="#222"/><circle cx="918" cy="175.5" r="1.8" fill="#222"/>
<!-- bicycle -->
<circle cx="899" cy="215.5" r="8.3" fill="none" stroke="#111" stroke-width="1.3"/>
<circle cx="928" cy="215.5" r="8.3" fill="none" stroke="#111" stroke-width="1.3"/>
<path d="M899,215.5 L908,204 L923,203 L928,215.5 M908,204 L913,214 L923,203 M913,214 L899,215.5" stroke="#b050b0" stroke-width="1.6" fill="none"/>
<circle cx="919.5" cy="184.8" r="3" fill="#1a3060"/>
<path d="M911,188 L918,188 L919,199 L909,199Z" fill="#a8e060"/>
<path d="M905,197 L912,198 L911,203 L904,202Z" fill="#111"/>
<path d="M917,191 L923,199" stroke="#e0c0a0" stroke-width="1.3"/>
<path d="M910,201 L914,208 L912,213" stroke="#e8c8d0" stroke-width="2" fill="none"/>
<!-- runner -->
<circle cx="916" cy="230" r="2.5" fill="#e0c8a8" stroke="#70a0a0" stroke-width="0.8"/>
<path d="M912,233 L920.5,233 L920.5,244 L912,244Z" fill="#30a8c0"/>
<path d="M912,235 L910,243 M920,236 L923,242" stroke="#e0c0a0" stroke-width="1.3"/>
<path d="M912,244 L920.5,244 L920,254 L918,266 L915,266 L915,255 L913,265 L910,265Z" fill="#f0a030"/>
<path d="M909,267 L913,268 M915,268 L919,269" stroke="#206040" stroke-width="2"/>
</g>
<!-- book -->
<defs>
<linearGradient id="pg1" x1="0" y1="0" x2="1" y2="1"><stop offset="0" stop-color="#e6dcb4"/><stop offset="0.5" stop-color="#f6f0da"/><stop offset="1" stop-color="#ebe2c2"/></linearGradient>
<linearGradient id="pg2" x1="0" y1="0" x2="1" y2="0"><stop offset="0" stop-color="#f2ecd2"/><stop offset="1" stop-color="#e6dcba"/></linearGradient>
</defs>
<g>
<path d="M843,317 L850,312 L926,305 L962,300 L986,396 L986,406 L926,401.5 L863,407Z" fill="#5a3418"/>
<path d="M849,300 L866,400 Q897,397 926,394 Q955,396 983,399 L962,300 Q935,296 906,303 Q880,297 849,300Z" fill="#efe8cc" stroke="#a89868" stroke-width="0.6"/>
<path d="M868,383 Q898,379 926,381 Q955,380 981,385 M868,387 Q898,383 926,385 Q955,384 982,389 M868,391 Q898,387 926,389 Q955,388 982,393 M868,395 Q898,391 926,392 Q955,392 983,397" stroke="#cfc4a0" stroke-width="0.7" fill="none"/>
<path d="M850,306 L866,396 M852,303 L868,394" stroke="#d0c6a0" stroke-width="0.6"/>
<path d="M855,294.5 Q851,303 856,311 L871,377 Q898,372 926,378 L908,301 Q890,296 875,298 Q862,298 855,294.5Z" fill="url(#pg1)" stroke="#a89868" stroke-width="0.6"/>
<path d="M908,300.5 L926,378 Q955,371 981,381 L961,300 Q935,296 908,300.5Z" fill="url(#pg2)" stroke="#a89868" stroke-width="0.5"/>
<path d="M916,316 L964,314 M918,326 L966,324 M920,336 L969,334 M922,346 L972,344 M924,356 L974,354 M926,366 L977,364" stroke="#e4dcc4" stroke-width="0.9"/>
<path d="M878,335 L903,334 M879,345 L906,344 M880,355 L909,354 M881,365 L912,364" stroke="#e4dcc4" stroke-width="0.9"/>
<path d="M904.5,296 L908,296 L927.5,377 L925,378Z" fill="#1c2aa0" stroke="#0a1050" stroke-width="0.6"/>
<path d="M904,293 L905.5,297" stroke="#b0b0b0" stroke-width="1.4"/>
<text transform="translate(864.5,323.5) rotate(-3)" font-family="Liberation Sans" font-size="14.5" fill="#1a1a10" textLength="37" lengthAdjust="spacingAndGlyphs">Exercise</text>
<text transform="translate(865,342) rotate(-2)" font-family="Liberation Sans" font-size="14.5" fill="#1a1a10" textLength="16.5" lengthAdjust="spacingAndGlyphs">Log</text>
</g>
<!-- bmr heart icon -->
<defs>
<radialGradient id="yel" cx="0.5" cy="0.45" r="0.65"><stop offset="0" stop-color="#fffce0"/><stop offset="0.6" stop-color="#ffe88a"/><stop offset="1" stop-color="#f8c840"/></radialGradient>
<linearGradient id="hrt" x1="0" y1="0" x2="0" y2="1"><stop offset="0" stop-color="#f8c0c8"/><stop offset="0.4" stop-color="#e85868"/><stop offset="0.7" stop-color="#c81020"/><stop offset="1" stop-color="#900010"/></linearGradient>
</defs>
<rect x="718" y="300" width="35" height="35" rx="4" fill="url(#yel)"/>
<path d="M735.5,324 C731,319 723,314 723,308 C723,303.5 727,301 730.5,301.5 C733,302 734.5,303.5 735.5,305 C736.5,303.5 738,302 740.5,301.5 C744,301 748,303.5 748,308 C748,314 740,319 735.5,324Z" fill="url(#hrt)" stroke="#600a0a" stroke-width="0.8"/>
<path d="M720,328 L726,328 L728,324 L730,331 L732,327 L739,327 L741,323 L743,331 L745,327 L751,327" stroke="#80b040" stroke-width="0.7" fill="none"/>
<ellipse cx="735.5" cy="309" rx="14.5" ry="6.5" fill="none" stroke="#8a7040" stroke-width="0.7"/>
<!-- pyramid -->
<path d="M477.9,229 L500.6,270 L457.1,270Z" fill="#f0f0ec" stroke="#505050" stroke-width="0.7"/>
<path d="M477.9,229 L500.6,270" stroke="#303030" stroke-width="1.2"/>
<path d="M467.5,248 L488.8,248 M461.5,259 L494.7,259 M457.1,270 L500.6,270" stroke="#606060" stroke-width="0.9"/>
<path d="M477.5,251 L477.5,258" stroke="#909090" stroke-width="0.6"/>
<ellipse cx="476" cy="234" rx="2.2" ry="2.5" fill="#d8d0b8"/>
<rect x="473.5" y="239" width="4" height="7" fill="#8a8a8a" opacity="0.8"/>
<circle cx="470.5" cy="254" r="2.6" fill="#d8b030"/>
<circle cx="474.5" cy="253" r="2.8" fill="#60a030"/>
<circle cx="473.5" cy="256.5" r="2" fill="#a04040"/>
<circle cx="483" cy="253" r="2.3" fill="#e0b030"/>
<circle cx="487" cy="254" r="2.5" fill="#50a030"/>
<circle cx="464" cy="265" r="2.8" fill="#908070"/>
<circle cx="470" cy="264.5" r="2.5" fill="#a89878"/>
<circle cx="476" cy="265" r="2.6" fill="#b0a080"/>
<circle cx="484" cy="264" r="2.8" fill="#a08860"/>
<circle cx="491" cy="265" r="2.4" fill="#90a070"/>
</g>
</svg>
<div class="a edit" style="left:479px;top:227px">Edit</div>
<!-- BOTTOM -->
<div class="a" style="left:165px;top:696px;width:697px;height:68px;background:linear-gradient(#c8f0c8 0%,#c0e8bc 45%,#a8c8a0 100%);border:1px solid #98b898;border-top-color:#a8c8a8;border-right-color:#b0d0a8"></div>
<div class="a btnb bt" style="left:170px;top:717px;width:66px;height:27px;font-weight:normal;letter-spacing:1px">Help</div>
<div class="a btnb bt" style="left:241px;top:717px;width:109px;height:27px;font-weight:normal;letter-spacing:1px">Disclaimer</div>
<div class="a btnb bt" style="left:460px;top:717px;width:98px;height:27px;font-weight:normal;letter-spacing:1px">Reset All</div>
<div class="a" style="left:569px;top:720px;width:124px;height:20px;background:#ececec;border:1px solid #c8d0d8;font-size:14px;color:#222;text-align:right;padding-right:3px;line-height:18px;letter-spacing:1px">0.0</div>
<div class="a" style="left:698px;top:721px;font-size:15px;color:#333;line-height:17px;letter-spacing:0.5px">years</div>
<svg class="a" style="left:740px;top:700px" width="120" height="60">
<defs>
<radialGradient id="pbg" cx="0.5" cy="0.4" r="0.65"><stop offset="0" stop-color="#b8e8ff"/><stop offset="0.55" stop-color="#60bce8"/><stop offset="1" stop-color="#3890c8"/></radialGradient>
<linearGradient id="pring" x1="0" y1="0" x2="0.7" y2="1"><stop offset="0" stop-color="#f4f4f8"/><stop offset="0.6" stop-color="#c0c0c8"/><stop offset="1" stop-color="#808088"/></linearGradient>
</defs>
<circle cx="39.5" cy="33" r="20" fill="#303030" opacity="0.6"/>
<circle cx="37.7" cy="31" r="19.6" fill="url(#pring)"/>
<circle cx="37.7" cy="31" r="16.8" fill="#2878b0"/>
<circle cx="37.7" cy="31" r="16" fill="url(#pbg)"/>
<path d="M31.6,23.4 L46.2,30.7 L31.6,38Z" fill="#000"/>
<circle cx="88" cy="32.5" r="15.5" fill="#303030" opacity="0.6"/>
<circle cx="86.5" cy="30.7" r="15.3" fill="url(#pring)"/>
<circle cx="86.5" cy="30.7" r="12.8" fill="#2878b0"/>
<circle cx="86.5" cy="30.7" r="12.1" fill="url(#pbg)"/>
<rect x="81.9" y="24.6" width="3.2" height="11.1" fill="#000"/>
<path d="M87.8,24.8 L93.8,30.2 L87.8,35.6Z" fill="#000"/>
</svg>
</div>
</body></html>
